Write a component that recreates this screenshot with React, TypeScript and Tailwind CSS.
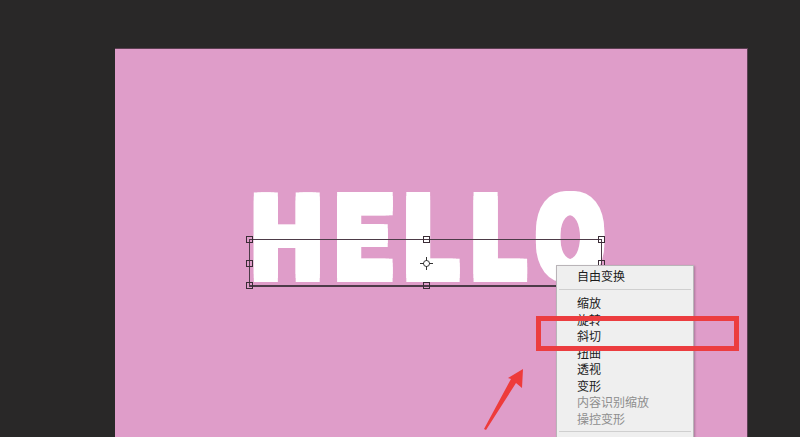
import React from 'react';

const menuItems: { label: string; disabled?: boolean }[] = [
  { label: '缩放' },
  { label: '旋转' },
  { label: '斜切' },
  { label: '扭曲' },
  { label: '透视' },
  { label: '变形' },
  { label: '内容识别缩放', disabled: true },
  { label: '操控变形', disabled: true },
];

// transform handle positions, relative to the bounding box
const handles = [
  'left-[-4px] top-[-4px]',
  'left-[173px] top-[-4px]',
  'right-[-4px] top-[-4px]',
  'left-[-4px] top-[20px]',
  'right-[-4px] top-[20px]',
  'left-[-4px] bottom-[-4px]',
  'left-[173px] bottom-[-4px]',
  'right-[-4px] bottom-[-4px]',
];

function ContextMenu() {
  return (
    <div className="absolute left-[556px] top-[265px] w-[138px] h-[190px] bg-[#efefef] border border-[#b9b4b8] shadow-[1px_1px_2px_rgba(0,0,0,0.25)] pt-[2px] font-['Noto_Sans_CJK_SC',sans-serif] text-[12px] text-[#1b1b1b]">
      <div className="h-[16px] leading-[16px] pl-[20px]">自由变换</div>
      <div className="h-[11px] flex items-center px-[2px]">
        <div className="h-px w-full bg-[#cfcfcf]" />
      </div>
      <div className="flex flex-col">
        {menuItems.map((item) => (
          <div
            key={item.label}
            className={`h-[16.5px] leading-[16.5px] pl-[20px] ${item.disabled ? 'text-[#8e8e8e]' : ''}`}
          >
            {item.label}
          </div>
        ))}
      </div>
      <div className="h-[9px] flex items-center px-[2px]">
        <div className="h-px w-full bg-[#cfcfcf]" />
      </div>
    </div>
  );
}

function TransformBox() {
  return (
    <div className="absolute left-[249px] top-[239px] w-[353px] h-[48px] border border-[#4d3b48] border-b-2">
      {handles.map((pos) => (
        <div key={pos} className={`absolute ${pos} w-[7px] h-[7px] border border-[#3a2c36] bg-transparent`} />
      ))}
      <svg className="absolute left-[170px] top-[17px]" width="13" height="13" viewBox="0 0 13 13">
        <circle cx="6.5" cy="6.5" r="3" fill="none" stroke="#333" strokeWidth="1" />
        <path d="M6.5 0v4M6.5 9v4M0 6.5h4M9 6.5h4" stroke="#333" strokeWidth="1" />
      </svg>
    </div>
  );
}

export default function App() {
  return (
    <div className="relative w-[800px] h-[437px] bg-[#292828] overflow-hidden">
      <div className="absolute left-[115px] top-[48px] w-[633px] h-[400px] bg-[#df9dc9] border-t border-r border-[#5c3f53]" />

      <div className="absolute left-[252px] top-[193px] h-[94px] w-[380px] flex items-end">
        <span className="block whitespace-nowrap origin-bottom-left scale-x-[0.86] font-['Roboto',sans-serif] font-black text-[115px] leading-[94px] text-white tracking-[16px] [text-shadow:4px_0_0_white,-4px_0_0_white,0_4px_0_white,0_-4px_0_white,4px_4px_0_white,-4px_4px_0_white,4px_-4px_0_white,-4px_-4px_0_white,2px_0_0_white,-2px_0_0_white,0_2px_0_white,0_-2px_0_white] translate-y-[-1px]">
          HELLO
        </span>
      </div>

      <TransformBox />
      <ContextMenu />

      <div className="absolute left-[536px] top-[316px] w-[203px] h-[35px] border-[5px] border-[#ec3d3f]" />

      <svg className="absolute left-[480px] top-[362px]" width="50" height="75" viewBox="480 362 50 75">
        <polygon
          points="523,369 522,388 516,383 486,430 484,429 511,379 508,378"
          fill="#ee3b3b"
        />
      </svg>
    </div>
  );
}
